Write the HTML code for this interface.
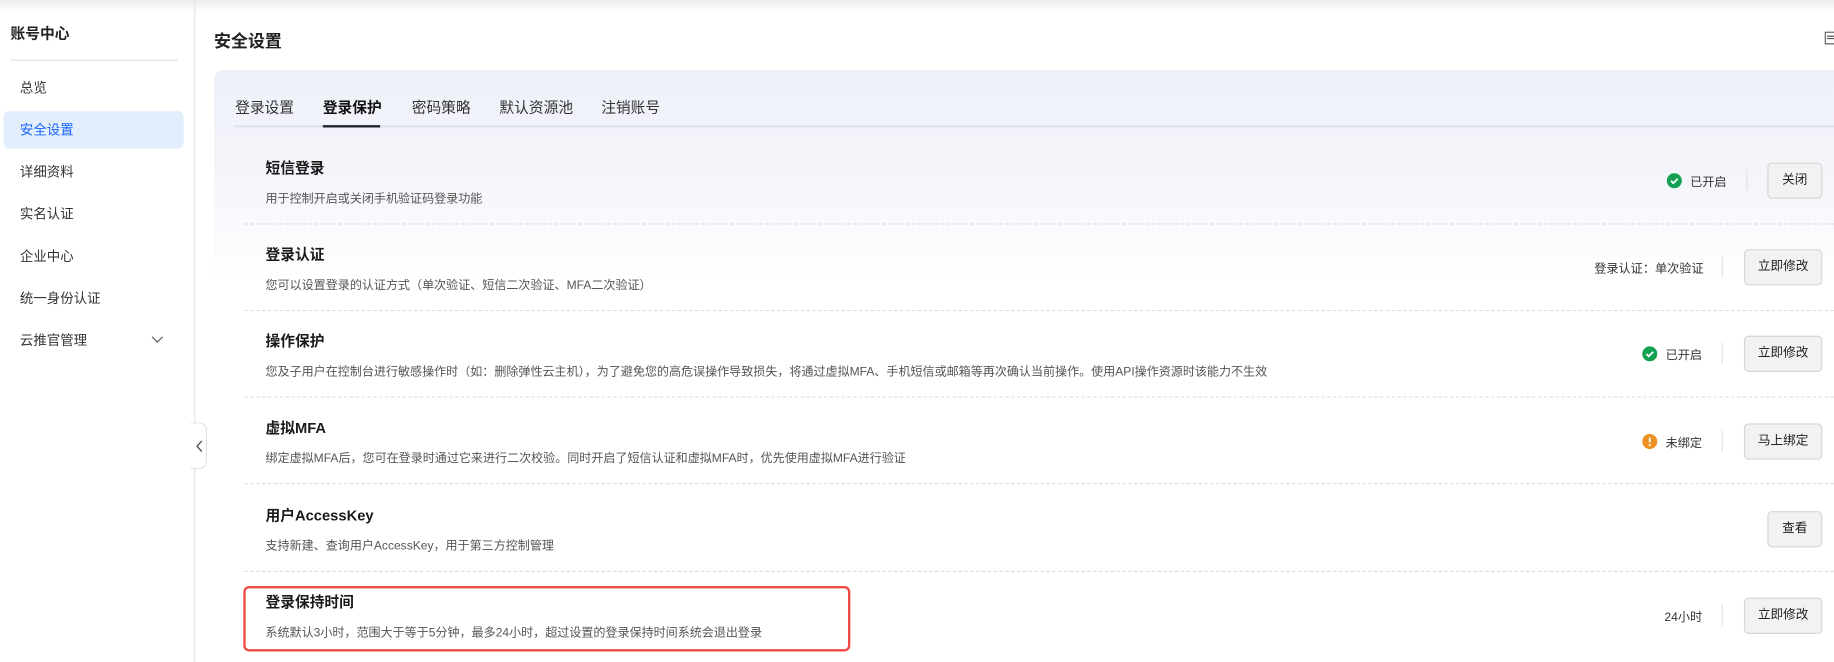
<!DOCTYPE html>
<html><head><meta charset="utf-8"><style>
*{margin:0;padding:0;box-sizing:border-box}
body{width:1834px;height:661px;overflow:hidden;background:#fff;font-family:"Liberation Sans","Noto Sans CJK SC",sans-serif;color:#1f2329;position:relative}
#w{position:absolute;left:0;top:0;width:1568px;height:566px;transform:scale(1.16964);transform-origin:0 0;overflow:hidden}
.a{position:absolute;white-space:nowrap}
.top{position:absolute;left:0;top:0;width:1568px;height:10px;background:linear-gradient(#ececec,#fff)}
.side{position:absolute;left:0;top:0;width:167px;height:566px;border-right:1px solid #e3e3e3}
.mi{position:absolute;left:17px;font-size:11.5px;color:#333}
.card{position:absolute;left:183px;top:60px;width:1500px;height:520px;border-radius:8px;background:linear-gradient(#eef0f9 0px,#f5f6fb 100px,#fff 180px)}
.tab{position:absolute;top:81px;font-size:12.6px;color:#333}
.t{position:absolute;left:227px;font-size:12.6px;font-weight:bold;color:#1a1a1a}
.d{position:absolute;left:227px;font-size:10.3px;color:#555}
.dash{position:absolute;left:209px;width:1359px;border-top:1px dashed #dcdfe6}
.btn{position:absolute;height:31px;border:1px solid #d6d6d6;border-radius:4px;background:#f2f2f2;font-size:10.8px;color:#222;text-align:center;line-height:29px}
.st{position:absolute;font-size:10.4px;color:#333}
.vl{position:absolute;width:1px;height:18px;background:#dde0e6}
.ic{position:absolute;width:13px;height:13px;border-radius:50%}
</style></head><body><div id="w">
<div class="top"></div>
<div class="side">
<div class="a" style="left:9px;top:18px;font-size:12.6px;font-weight:bold;color:#222">账号中心</div>
<div class="a" style="left:9px;top:51px;width:143px;border-top:1px solid #e3e3e3"></div>
<div class="mi" style="top:67px">总览</div>
<div class="a" style="left:3px;top:95px;width:154px;height:32px;border-radius:5px;background:#e3eefc"></div>
<div class="mi" style="top:103px;color:#1664ff">安全设置</div>
<div class="mi" style="top:139px">详细资料</div>
<div class="mi" style="top:175px">实名认证</div>
<div class="mi" style="top:211px">企业中心</div>
<div class="mi" style="top:247px">统一身份认证</div>
<div class="mi" style="top:283px">云推官管理</div>
<svg class="a" style="left:129px;top:287px" width="11" height="7"><path d="M1 1l4.5 4.5L10 1" fill="none" stroke="#666" stroke-width="1.1"/></svg>
</div>
<div class="a" style="left:163px;top:361px;width:14px;height:40px;background:#fff;border:1px solid #e3e3e3;border-left:none;border-radius:0 7px 7px 0"></div>
<svg class="a" style="left:167px;top:376px" width="7" height="11"><path d="M5.5 1L1.5 5.5l4 4.5" fill="none" stroke="#555" stroke-width="1.2"/></svg>
<div class="a" style="left:183px;top:24px;font-size:14.5px;font-weight:bold;color:#222">安全设置</div>
<svg class="a" style="left:1560px;top:27px" width="9" height="11"><rect x="0.5" y="0.5" width="8" height="10" fill="none" stroke="#555"/><path d="M2 4h6M2 6h6" stroke="#555"/></svg>
<div class="card"></div>
<div class="tab" style="left:201px">登录设置</div>
<div class="tab" style="left:276px;font-weight:bold;color:#111">登录保护</div>
<div class="tab" style="left:352px">密码策略</div>
<div class="tab" style="left:427px">默认资源池</div>
<div class="tab" style="left:514px">注销账号</div>
<div class="a" style="left:201px;top:107px;width:1367px;height:2px;background:#dfe1e8"></div>
<div class="a" style="left:276px;top:107px;width:49px;height:2px;background:#1f2329"></div>

<div class="t" style="top:133px">短信登录</div>
<div class="d" style="top:161px">用于控制开启或关闭手机验证码登录功能</div>
<div class="dash" style="top:191px"></div>
<div class="t" style="top:207px">登录认证</div>
<div class="d" style="top:235px">您可以设置登录的认证方式（单次验证、短信二次验证、MFA二次验证）</div>
<div class="dash" style="top:265px"></div>
<div class="t" style="top:281px">操作保护</div>
<div class="d" style="top:309px">您及子用户在控制台进行敏感操作时（如：删除弹性云主机），为了避免您的高危误操作导致损失，将通过虚拟MFA、手机短信或邮箱等再次确认当前操作。使用API操作资源时该能力不生效</div>
<div class="dash" style="top:339px"></div>
<div class="t" style="top:355px">虚拟MFA</div>
<div class="d" style="top:383px">绑定虚拟MFA后，您可在登录时通过它来进行二次校验。同时开启了短信认证和虚拟MFA时，优先使用虚拟MFA进行验证</div>
<div class="dash" style="top:413px"></div>
<div class="t" style="top:430px">用户AccessKey</div>
<div class="d" style="top:458px">支持新建、查询用户AccessKey，用于第三方控制管理</div>
<div class="dash" style="top:488px"></div>
<div class="t" style="top:504px">登录保持时间</div>
<div class="d" style="top:532px">系统默认3小时，范围大于等于5分钟，最多24小时，超过设置的登录保持时间系统会退出登录</div>
<div class="a" style="left:208px;top:501px;width:519px;height:56px;border:2px solid #f04a45;border-radius:5px"></div>

<svg class="ic" style="left:1425px;top:148px" viewBox="0 0 13 13"><circle cx="6.5" cy="6.5" r="6.5" fill="#12a150"/><path d="M3.6 6.6l2 2 3.8-3.8" fill="none" stroke="#fff" stroke-width="1.5"/></svg>
<div class="st" style="left:1445px;top:147px">已开启</div>
<div class="vl" style="left:1493px;top:145px"></div>
<div class="btn" style="left:1511px;top:139px;width:47px">关闭</div>

<div class="st" style="left:1363px;top:221px">登录认证：单次验证</div>
<div class="vl" style="left:1472px;top:219px"></div>
<div class="btn" style="left:1491px;top:213px;width:67px">立即修改</div>

<svg class="ic" style="left:1404px;top:296px" viewBox="0 0 13 13"><circle cx="6.5" cy="6.5" r="6.5" fill="#12a150"/><path d="M3.6 6.6l2 2 3.8-3.8" fill="none" stroke="#fff" stroke-width="1.5"/></svg>
<div class="st" style="left:1424px;top:295px">已开启</div>
<div class="vl" style="left:1472px;top:293px"></div>
<div class="btn" style="left:1491px;top:287px;width:67px">立即修改</div>

<svg class="ic" style="left:1404px;top:371px" viewBox="0 0 13 13"><circle cx="6.5" cy="6.5" r="6.5" fill="#ed9222"/><path d="M6.5 3v4.2" stroke="#fff" stroke-width="1.6"/><circle cx="6.5" cy="9.6" r="0.9" fill="#fff"/></svg>
<div class="st" style="left:1424px;top:370px">未绑定</div>
<div class="vl" style="left:1472px;top:368px"></div>
<div class="btn" style="left:1491px;top:362px;width:67px">马上绑定</div>

<div class="btn" style="left:1511px;top:437px;width:47px">查看</div>

<div class="st" style="left:1423px;top:519px">24小时</div>
<div class="vl" style="left:1472px;top:517px"></div>
<div class="btn" style="left:1491px;top:511px;width:67px">立即修改</div>
</div></body></html>
